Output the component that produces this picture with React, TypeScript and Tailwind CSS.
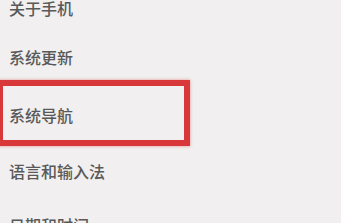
import React from "react";

const font = { fontFamily: '"Noto Sans CJK SC", "Noto Sans", sans-serif' };

function Row({ label, className }: { label: string; className?: string }) {
  return (
    <div className={`pl-[9px] text-[16px] font-medium leading-[16px] text-[#595959] ${className ?? ""}`}>
      {label}
    </div>
  );
}

export default function App() {
  return (
    <div
      className="flex h-[223px] w-[341px] flex-col overflow-hidden bg-[#f1efef]"
      style={font}
    >
      <Row label="关于手机" />
      <Row label="系统更新" className="mt-[33px]" />
      <div className="-ml-[3px] mt-[15px] w-[193px] border-[6px] border-[#d8383a] pt-[21px] pb-[17px] pl-[6px] shadow-[0_0_3px_rgba(216,56,58,0.5)]">
        <div className="text-[16px] font-medium leading-[16px] text-[#595959]">系统导航</div>
      </div>
      <Row label="语言和输入法" className="mt-[17px]" />
      <Row label="日期和时间" className="mt-[38px]" />
    </div>
  );
}
